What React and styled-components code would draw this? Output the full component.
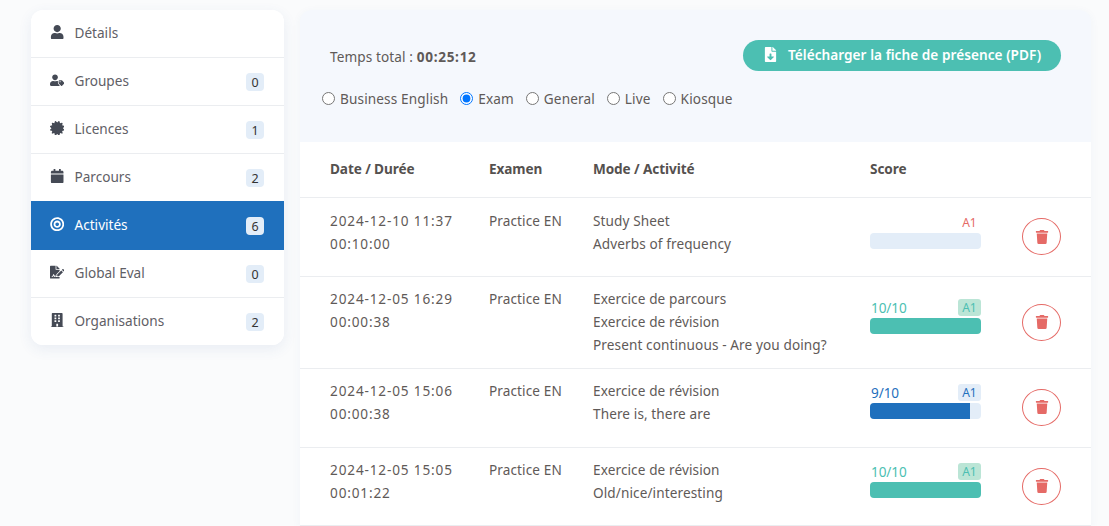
import React from "react";
import styled, { createGlobalStyle } from "styled-components";
import { FaUser, FaUserTag, FaCertificate, FaCalendar, FaBullseye, FaFileSignature, FaBuilding, FaFileDownload, FaTrash } from "react-icons/fa";

const Global = createGlobalStyle`
  html, body { margin: 0; padding: 0; height: 526px; overflow: hidden; background: #fafbfc; }
  body { font-family: "Noto Sans", "Open Sans", sans-serif; color: #5f5a58; }
  * { box-sizing: border-box; }
`;
const Page = styled.div`
  display: flex; align-items: flex-start; gap: 16px;
  padding: 10px 18px 0 31px; width: 1109px; height: 526px; overflow: hidden;
`;
const Sidebar = styled.nav`
  width: 253px; flex: none; background: #fff; border-radius: 12px; overflow: hidden;
  box-shadow: 0 4px 14px rgba(60, 90, 150, 0.09);
`;
const NavRow = styled.div`
  height: ${p => (p.$active ? "49px" : p.$last ? "47px" : "48px")};
  margin-top: ${p => (p.$active ? "-1px" : "0")};
  display: flex; align-items: center; padding: 0 20px 3px 19px;
  background: ${p => (p.$active ? "#1f70bd" : "#fff")};
  color: ${p => (p.$active ? "#fff" : "#5f6066")};
  font-size: 13.6px;
  border-bottom: ${p => (p.$last || p.$active ? "none" : "1px solid #ebedf0")};
`;
const NavIcon = styled.span`
  width: 24.5px; flex: none; display: flex; align-items: center; font-size: 14.4px;
  color: ${p => (p.$active ? "#fff" : "#454a55")};
`;
const NavLabel = styled.span`flex: 1;`;
const Count = styled.span`
  width: 18px; height: 18px; border-radius: 4px; background: #e3edf8; color: #333;
  font-size: 12.5px; display: flex; align-items: center; justify-content: center; margin-top: 4px;
`;
const Main = styled.main`
  flex: 1; min-width: 0; height: 516px; background: #f5f8fd; border-radius: 12px 12px 0 0; overflow: hidden;
  box-shadow: 0 2px 10px rgba(60, 90, 150, 0.05);
`;
const Header = styled.div`
  height: 132px; padding: 30px 30px 0 22px; display: flex; flex-direction: column;
`;
const TopLine = styled.div`
  display: flex; justify-content: space-between; align-items: center; padding-left: 8px;
`;
const Total = styled.div`
  font-size: 13.6px; letter-spacing: 0.1px; margin-top: 2px;
  b { font-weight: 700; letter-spacing: 0.7px; }
`;
const DownloadButton = styled.button`
  width: 318px; height: 31px; border: 0; border-radius: 16px; background: #4cbfb2; color: #fff;
  display: flex; align-items: center; justify-content: center; gap: 10px; padding: 0 0 2px;
  font: 600 13.6px "Noto Sans", sans-serif; letter-spacing: 0.05px;
  svg { font-size: 15px; }
`;
const Radios = styled.div`display: flex; align-items: center; gap: 12px; margin-top: 18px;`;
const RadioLabel = styled.label`
  display: flex; align-items: center; gap: 5px; font-size: 13.6px; letter-spacing: 0.13px;
  input { margin: 0; width: 13px; height: 13px; }
`;
const Table = styled.div`background: #fff; height: 384px;`;
const Row = styled.div`
  display: grid; grid-template-columns: 159px 104px 277px 152px 1fr;
  height: ${p => p.$h}px; padding-left: 30px; border-bottom: 1px solid #ebedf0;
  font-size: 13.6px; line-height: 23px; letter-spacing: 0.1px;
`;
const HeadRow = styled(Row)`
  align-items: center; font-weight: 700; color: #55514f; letter-spacing: -0.1px; padding-bottom: 2px;
`;
const Cell = styled.div`padding-top: ${p => p.$top}px;`;
const DateCell = styled(Cell)`letter-spacing: 0.85px;`;
const ScoreCell = styled.div`
  width: 111px; padding-top: ${p => p.$top}px;
`;
const ScoreTop = styled.div`
  display: flex; justify-content: space-between; align-items: center; height: 17px;
  color: ${p => p.$c}; font-size: 13.6px; letter-spacing: -0.1px; padding-left: 1px;
`;
const Level = styled.span`
  font-size: 12px; line-height: 17px; padding: 0 4.5px; border-radius: 3px; background: ${p => p.$bg};
`;
const Track = styled.div`
  height: 16px; border-radius: 4px; background: #e3edf8; overflow: hidden; margin-top: 2px;
`;
const Fill = styled.div`height: 100%; background: ${p => p.$c};`;
const ActionCell = styled.div`display: flex; align-items: center; margin-bottom: ${p => p.$mb}px;`;
const DeleteButton = styled.button`
  width: 39px; height: 37px; border-radius: 50%; background: #fff; border: 1px solid #e56a66; color: #e56a66;
  display: flex; align-items: center; justify-content: center; padding: 0; font-size: 14px;
`;

const nav = [
  [FaUser, "Détails"], [FaUserTag, "Groupes", 0], [FaCertificate, "Licences", 1],
  [FaCalendar, "Parcours", 2], [FaBullseye, "Activités", 6, true],
  [FaFileSignature, "Global Eval", 0], [FaBuilding, "Organisations", 2, false, true],
];
const rows = [
  { d: "2024-12-10 11:37", t: "00:10:00", m: ["Study Sheet", "Adverbs of frequency"], h: 79, c: "#e56a66", s: "", pct: 0, bg: "transparent", top: 16, cell: 11, mb: 1 },
  { d: "2024-12-05 16:29", t: "00:00:38", m: ["Exercice de parcours", "Exercice de révision", "Present continuous - Are you doing?"], h: 92, c: "#4cbfb2", s: "10/10", pct: 100, bg: "#bbe5d6", top: 22, cell: 10, mb: 1 },
  { d: "2024-12-05 15:06", t: "00:00:38", m: ["Exercice de révision", "There is, there are"], h: 79, c: "#1f70bd", s: "9/10", pct: 90, bg: "#e3edf8", top: 15, cell: 10, mb: 2 },
  { d: "2024-12-05 15:05", t: "00:01:22", m: ["Exercice de révision", "Old/nice/interesting"], h: 78, c: "#4cbfb2", s: "10/10", pct: 100, bg: "#bbe5d6", top: 15, cell: 10, mb: 1 },
];

export default function App() {
  return (
    <Page>
      <Global />
      <Sidebar>
        {nav.map(([Icon, label, n, active, last]) => (
          <NavRow key={label} $active={active} $last={last}>
            <NavIcon $active={active}><Icon /></NavIcon>
            <NavLabel>{label}</NavLabel>
            {n !== undefined && <Count>{n}</Count>}
          </NavRow>
        ))}
      </Sidebar>
      <Main>
        <Header>
          <TopLine>
            <Total>Temps total : <b>00:25:12</b></Total>
            <DownloadButton><FaFileDownload />Télécharger la fiche de présence (PDF)</DownloadButton>
          </TopLine>
          <Radios>
            {["Business English", "Exam", "General", "Live", "Kiosque"].map(x => (
              <RadioLabel key={x}>
                <input type="radio" name="cat" defaultChecked={x === "Exam"} />{x}
              </RadioLabel>
            ))}
          </Radios>
        </Header>
        <Table>
          <HeadRow $h={56}>
            <div>Date / Durée</div><div>Examen</div><div>Mode / Activité</div><div>Score</div><div />
          </HeadRow>
          {rows.map(r => (
            <Row key={r.d} $h={r.h}>
              <DateCell $top={r.cell}>{r.d}<br />{r.t}</DateCell>
              <Cell $top={r.cell}>Practice EN</Cell>
              <Cell $top={r.cell}>{r.m.map(x => <div key={x}>{x}</div>)}</Cell>
              <ScoreCell $top={r.top}>
                <ScoreTop $c={r.c}><span>{r.s}</span><Level $bg={r.bg}>A1</Level></ScoreTop>
                <Track><Fill $c={r.c} style={{ width: `${r.pct}%` }} /></Track>
              </ScoreCell>
              <ActionCell $mb={r.mb}><DeleteButton aria-label="Supprimer"><FaTrash /></DeleteButton></ActionCell>
            </Row>
          ))}
        </Table>
      </Main>
    </Page>
  );
}
